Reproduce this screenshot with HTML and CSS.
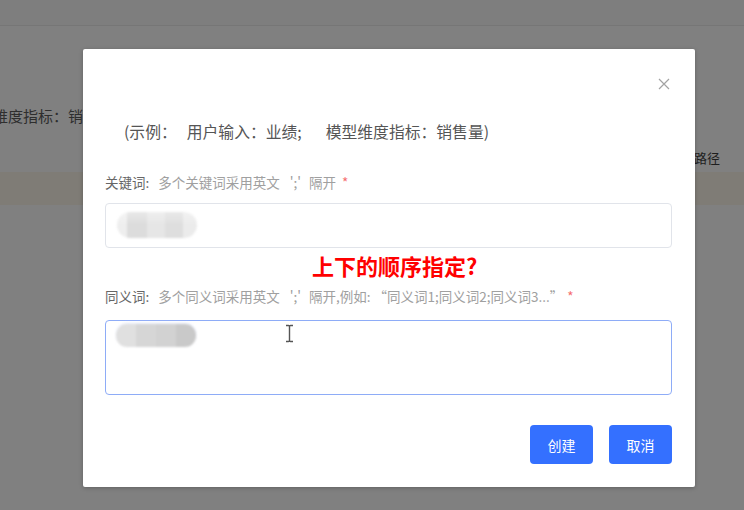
FILE: index.html
```html
<!DOCTYPE html>
<html lang="zh">
<head>
<meta charset="utf-8">
<title>新建同义词</title>
<link rel="stylesheet" href="styles.css">
</head>
<body>
<div class="page">
  <div class="topbar"></div>
  <div class="content">
    <div class="bg-line">模型维度指标：销售量</div>
    <div class="bg-right">路径</div>
    <div class="warn-band"></div>
  </div>
</div>

<div class="modal">
  <div class="modal-header">
    <button class="close" aria-label="关闭">
      <svg width="12" height="12" viewBox="0 0 12 12"><path d="M1 1L11 11M11 1L1 11" stroke="#a3a3a3" stroke-width="1.2" fill="none"/></svg>
    </button>
  </div>
  <div class="example"><span>(示例：</span><span class="ex-gap1">用户输入：业绩;</span><span class="ex-gap2">模型维度指标：销售量)</span></div>
  <div class="label"><span class="label-name">关键词:</span><span class="hint">多个关键词采用英文<span class="sep">';'</span>隔开</span><span class="req">*</span></div>
  <div class="input">
    <div class="blur blur-a"></div>
  </div>
  <div class="note">上下的顺序指定?</div>
  <div class="label"><span class="label-name">同义词:</span><span class="hint">多个同义词采用英文<span class="sep">';'</span>隔开,例如: “同义词1;同义词2;同义词3...”</span><span class="req req-far">*</span></div>
  <div class="textarea">
    <div class="blur blur-b"></div>
    <svg class="ibeam" width="9" height="19" viewBox="0 0 9 19"><path d="M1 1.5H3.5Q4.5 1.5 4.5 2.5V16.5Q4.5 17.5 3.5 17.5H1M8 1.5H5.5Q4.5 1.5 4.5 2.5M8 17.5H5.5Q4.5 17.5 4.5 16.5" stroke="#555" stroke-width="1.4" fill="none"/></svg>
  </div>
  <div class="footer">
    <button class="btn">创建</button>
    <button class="btn">取消</button>
  </div>
</div>
</body>
</html>
```

FILE: styles.css
```css
* { box-sizing: border-box; }
html, body { margin: 0; padding: 0; }
body {
  width: 744px;
  height: 510px;
  overflow: hidden;
  background: #808080;
  font-family: "Noto Sans CJK SC", "Noto Sans", sans-serif;
}
.page {
  height: 510px;
  background: #808080;
}
.topbar {
  height: 26px;
  background: #7e7e7e;
  border-bottom: 1px solid #767676;
}
.content {
  position: relative;
  height: 484px;
}
.bg-line {
  margin-left: -37px;
  padding-top: 79px;
  font-size: 15px;
  line-height: 22px;
  color: #2e2e2e;
  white-space: nowrap;
}
.bg-right {
  margin-left: 694px;
  margin-top: 21px;
  font-size: 13px;
  line-height: 20px;
  color: #1e1e1e;
}
.warn-band {
  margin-top: 4px;
  height: 33px;
  background: #7f7c76;
}

.modal {
  position: absolute;
  left: 83px;
  top: 49px;
  width: 612px;
  height: 438px;
  background: #fff;
  border-radius: 2px;
  box-shadow: 0 1px 4px rgba(0,0,0,0.25);
  padding: 0 23px 23px 22px;
  display: flex;
  flex-direction: column;
}
.modal-header {
  display: flex;
  justify-content: flex-end;
  padding-top: 29px;
  padding-right: 2px;
  height: 42px;
}
.close {
  border: 0;
  background: none;
  padding: 0;
  width: 12px;
  height: 12px;
  display: block;
}
.close svg { display: block; }
.example {
  margin-top: 31px;
  padding-left: 19px;
  font-size: 15.8px;
  line-height: 20px;
  color: #555;
  white-space: nowrap;
}
.ex-gap1 { margin-left: 10px; }
.ex-gap2 { margin-left: 24px; }
.label {
  margin-top: 30px;
  font-size: 13.5px;
  line-height: 20px;
  color: #a0a0a0;
  white-space: nowrap;
}
.label-name {
  color: #666;
  margin-right: 9px;
}
.sep { margin: 0 8px 0 10px; }
.req {
  color: #f56c6c;
  margin-left: 6px;
}
.req-far { margin-left: 4px; }
.input {
  margin-top: 11px;
  height: 45px;
  border: 1px solid #e1e4ea;
  border-radius: 4px;
  padding: 8px 0 0 11px;
}
.blur {
  height: 26px;
  width: 80px;
  border-radius: 13px;
  filter: blur(1px);
}
.blur-a {
  background:
    linear-gradient(180deg, rgba(255,255,255,0.35) 0%, rgba(255,255,255,0) 50%),
    linear-gradient(90deg, #eeeeee 0 12%, #dcdcdc 12% 38%, #e6e6e6 38% 60%, #dedede 60% 82%, #ebebeb 82% 100%);
}
.note {
  margin-top: 5px;
  margin-left: 207px;
  font-size: 22px;
  line-height: 25px;
  font-weight: 700;
  color: #ff0000;
}
.note + .label { margin-top: 8px; }
.textarea {
  position: relative;
  margin-top: 14px;
  height: 75px;
  border: 1.5px solid #8eacf7;
  border-radius: 4px;
  padding: 3px 0 0 10px;
}
.blur-b {
  height: 23px;
  width: 80px;
  border-radius: 11px;
  box-shadow: 0 -1px 2px #e6ecff;
  background: linear-gradient(90deg, #e0e0e0 0 25%, #d6d6d6 25% 50%, #d2d2d2 50% 75%, #c9c9c9 75% 100%);
}
.ibeam {
  position: absolute;
  left: 179px;
  top: 3px;
}
.footer {
  margin-top: auto;
  display: flex;
  justify-content: flex-end;
  gap: 16px;
}
.btn {
  width: 63px;
  height: 39px;
  border: 0;
  border-radius: 4px;
  background: #3470ff;
  color: #fff;
  font-family: "Noto Sans CJK SC", sans-serif;
  font-size: 14px;
  padding: 0;
}
```
